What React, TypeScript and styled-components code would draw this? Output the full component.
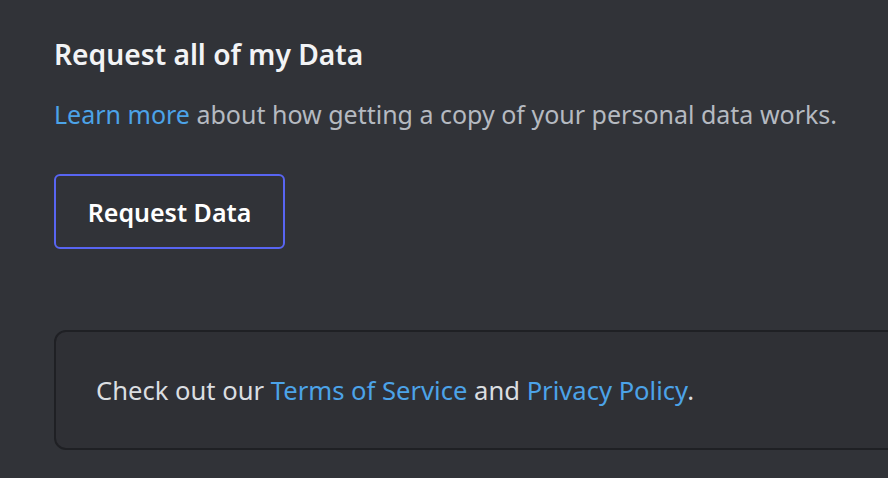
import React from "react";
import styled, { createGlobalStyle } from "styled-components";

const Global = createGlobalStyle`
  html, body { margin: 0; padding: 0; background: #313338; overflow: hidden; }
  body { font-family: "Noto Sans", "Open Sans", sans-serif; }
`;

const Page = styled.div`
  width: 888px;
  height: 478px;
  box-sizing: border-box;
  padding: 36px 0 0 54px;
  display: flex;
  flex-direction: column;
  overflow: hidden;
`;

const Heading = styled.h2`
  margin: 0;
  font-size: 28.2px;
  font-weight: 600;
  color: #f2f3f5;
  line-height: 36px;
`;

const Description = styled.p`
  margin: 26px 0 0;
  font-size: 25px;
  line-height: 32px;
  color: #b5bac1;
  white-space: nowrap;
`;

const Link = styled.a`
  color: #4ca3e8;
  text-decoration: none;
`;

const OutlineButton = styled.button`
  margin-top: 44px;
  width: 231px;
  height: 75px;
  box-sizing: border-box;
  border: 2px solid #5865f2;
  border-radius: 6px;
  background: transparent;
  color: #ffffff;
  font-family: inherit;
  font-size: 25px;
  font-weight: 600;
  align-self: flex-start;
`;

const InfoBox = styled.div`
  margin-top: 81px;
  width: 900px;
  height: 120px;
  box-sizing: border-box;
  border: 2px solid #1f2024;
  border-radius: 12px;
  background: #2f3035;
  padding: 0 0 0 40px;
  display: flex;
  align-items: center;
`;

const InfoText = styled.p`
  margin: 0;
  font-size: 25.6px;
  color: #dbdee1;
  white-space: nowrap;
`;

export default function App() {
  return (
    <>
      <Global />
      <Page>
        <Heading>Request all of my Data</Heading>
        <Description>
          <Link href="#">Learn more</Link> about how getting a copy of your personal data works.
        </Description>
        <OutlineButton>Request Data</OutlineButton>
        <InfoBox>
          <InfoText>
            Check out our <Link href="#">Terms of Service</Link> and <Link href="#">Privacy Policy</Link>.
          </InfoText>
        </InfoBox>
      </Page>
    </>
  );
}
